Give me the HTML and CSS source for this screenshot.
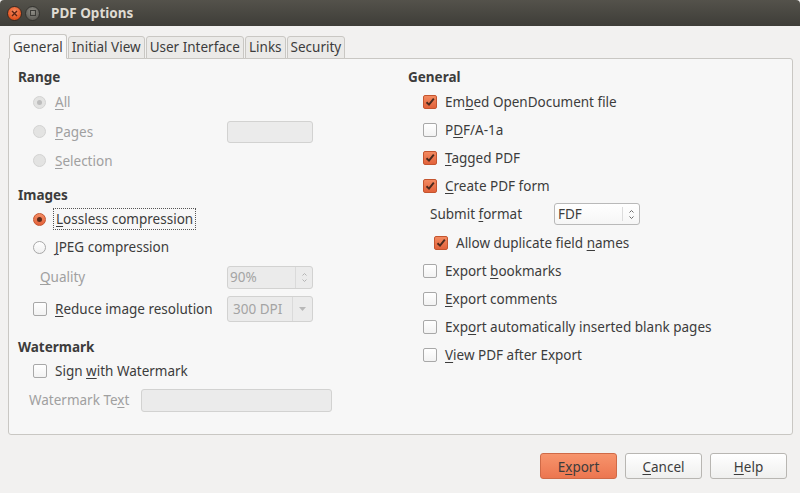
FILE: index.html
```html
<!DOCTYPE html>
<html>
<head>
<meta charset="utf-8">
<link rel="stylesheet" href="styles.css">
</head>
<body>
<div class="titlebar">
  <span class="wbtn close"><svg width="7" height="7" viewBox="0 0 7 7"><path d="M1 1L6 6M6 1L1 6" stroke="#5a2414" stroke-width="1.4"/></svg></span>
  <span class="wbtn grey"><span class="sq"></span></span>
  <span class="title">PDF Options</span>
</div>
<div class="tabs">
  <div class="tab active">General</div>
  <div class="tab">Initial View</div>
  <div class="tab">User Interface</div>
  <div class="tab">Links</div>
  <div class="tab">Security</div>
</div>
<div class="panel">
  <div class="col left">
    <div class="heading">Range</div>
    <div class="row r30">
      <div class="lbl"><span class="radio dis on"></span><span class="txt dim"><u>A</u>ll</span></div>
    </div>
    <div class="row r29">
      <div class="lbl"><span class="radio dis"></span><span class="txt dim"><u>P</u>ages</span></div>
      <div class="field dis w86"></div>
    </div>
    <div class="row r29">
      <div class="lbl"><span class="radio dis"></span><span class="txt dim"><u>S</u>election</span></div>
    </div>
    <div class="heading mt10">Images</div>
    <div class="row r28">
      <div class="lbl"><span class="radio on"></span><span class="txt focus"><u>L</u>ossless compression</span></div>
    </div>
    <div class="row r28">
      <div class="lbl"><span class="radio"></span><span class="txt"><u>J</u>PEG compression</span></div>
    </div>
    <div class="row r32">
      <div class="lbl"><span class="txt dim ind22"><u>Q</u>uality</span></div>
      <div class="field dis w86 spin"><span class="val">90%</span><span class="spinbox"><svg width="5" height="11" viewBox="0 0 5 11"><path d="M0.5 3.5L2.5 1.5L4.5 3.5" fill="none" stroke="#b4b4b4"/><path d="M0.5 7.5L2.5 9.5L4.5 7.5" fill="none" stroke="#b4b4b4"/></svg></span></div>
    </div>
    <div class="row r32">
      <div class="lbl"><span class="check"></span><span class="txt"><u>R</u>educe image resolution</span></div>
      <div class="field dis w86 combo"><span class="val">300 DPI</span><span class="drop"><svg width="7" height="4" viewBox="0 0 7 4"><path d="M0 0H7L3.5 4Z" fill="#b8b8b8"/></svg></span></div>
    </div>
    <div class="heading mt12">Watermark</div>
    <div class="row r28">
      <div class="lbl"><span class="check"></span><span class="txt">Sign <u>w</u>ith Watermark</span></div>
    </div>
    <div class="row r30">
      <span class="txt dim wmlbl">Watermark Te<u>x</u>t</span>
      <div class="field dis wm"></div>
    </div>
  </div>
  <div class="col right">
    <div class="heading">General</div>
    <div class="row r28 mt1"><span class="check on"></span><span class="txt">Em<u>b</u>ed OpenDocument file</span></div>
    <div class="row r28"><span class="check"></span><span class="txt">P<u>D</u>F/A-1a</span></div>
    <div class="row r28"><span class="check on"></span><span class="txt"><u>T</u>agged PDF</span></div>
    <div class="row r28"><span class="check on"></span><span class="txt"><u>C</u>reate PDF form</span></div>
    <div class="row r28">
      <span class="txt sublbl">Submit <u>f</u>ormat</span>
      <div class="field sel"><span class="val">FDF</span><span class="spinbox sep"><svg width="5" height="11" viewBox="0 0 5 11"><path d="M0.5 3.5L2.5 1.5L4.5 3.5" fill="none" stroke="#6a6a6a"/><path d="M0.5 7.5L2.5 9.5L4.5 7.5" fill="none" stroke="#6a6a6a"/></svg></span></div>
    </div>
    <div class="row r29 sub"><span class="check on"></span><span class="txt">Allow duplicate field <u>n</u>ames</span></div>
    <div class="row r28"><span class="check"></span><span class="txt">Export <u>b</u>ookmarks</span></div>
    <div class="row r28"><span class="check"></span><span class="txt"><u>E</u>xport comments</span></div>
    <div class="row r28"><span class="check"></span><span class="txt">Exp<u>o</u>rt automatically inserted blank pages</span></div>
    <div class="row r28"><span class="check"></span><span class="txt"><u>V</u>iew PDF after Export</span></div>
  </div>
</div>
<div class="buttons">
  <button class="btn primary">E<u>x</u>port</button>
  <button class="btn"><u>C</u>ancel</button>
  <button class="btn"><u>H</u>elp</button>
</div>
</body>
</html>
```
FILE: styles.css
```css
* { box-sizing: border-box; }
html, body { margin: 0; padding: 0; }
body {
  width: 800px;
  height: 493px;
  overflow: hidden;
  background: #f2f1f0;
  font-family: "Noto Sans", "Open Sans", sans-serif;
  font-size: 13.5px;
  color: #3c3c3c;
}
u { text-decoration: underline; text-underline-offset: 2px; text-decoration-thickness: 1px; }

.titlebar {
  height: 26px;
  background: linear-gradient(#54524b, #3e3d38);
  display: flex;
  align-items: center;
  padding-left: 7px;
  border-radius: 4px 4px 0 0;
}
.wbtn {
  width: 15px; height: 15px; border-radius: 50%;
  display: flex; align-items: center; justify-content: center;
  margin-right: 3px;
}
.wbtn.close {
  background: radial-gradient(circle at 50% 35%, #f78c62, #e2531f 70%);
  border: 1px solid #3a2a22;
}
.wbtn.grey {
  background: radial-gradient(circle at 50% 35%, #8f8d86, #63615b 70%);
  border: 1px solid #34332f;
}
.wbtn .sq { width: 6px; height: 6px; border: 1px solid #3c3b37; }
.title {
  margin-left: 8px;
  color: #dfdbd2;
  font-weight: bold;
  font-size: 13.5px;
}

.tabs {
  display: flex;
  align-items: flex-end;
  height: 25px;
  margin-top: 8px;
  padding-left: 9px;
  gap: 1px;
  margin-bottom: -1px;
}
.tab {
  position: relative;
  height: 23px;
  padding: 0 3px;
  line-height: 21px;
  font-size: 13.5px;
  background: #ebeae8;
  border: 1px solid #c9c7c3;
  border-radius: 3px 3px 0 0;
  color: #3c3c3c;
}
.tab.active {
  height: 25px;
  line-height: 24px;
  padding: 0 3px;
  background: #f7f7f7;
  border-bottom-color: #f7f7f7;
  z-index: 1;
}

.panel {
  margin: 0 7px 0 8px;
  height: 377px;
  background: #f7f7f7;
  border: 1px solid #c9c7c3;
  border-radius: 0 3px 3px 3px;
  display: grid;
  grid-template-columns: 390px 1fr;
  padding: 8px 0 0 9px;
}

.col { display: flex; flex-direction: column; }
.heading { height: 20px; line-height: 20px; font-weight: bold; font-size: 13.5px; }
.mt10 { margin-top: 10px; }
.mt12 { margin-top: 12px; }
.mt1 { margin-top: 1px; }
.row { display: flex; align-items: center; }
.r28 { height: 28px; }
.r29 { height: 29px; }
.r30 { height: 30px; }
.r32 { height: 32px; }
.lbl { display: flex; align-items: center; width: 209px; flex-shrink: 0; }
.txt { font-size: 13.5px; white-space: nowrap; }
.dim { color: #a0a0a0; }
.ind22 { margin-left: 22px; }
.focus { outline: 1px dotted #555; outline-offset: 1px; padding: 0 1px; }

.radio {
  width: 13px; height: 13px; border-radius: 50%;
  margin-left: 15px; margin-right: 9px;
  background: linear-gradient(#ffffff, #f0f0f0);
  border: 1px solid #a8a8a8;
  display: flex; align-items: center; justify-content: center;
  flex-shrink: 0;
}
.radio.on {
  background: linear-gradient(#f48d64, #e4623a);
  border-color: #c4552f;
}
.radio.on::after {
  content: ""; width: 5px; height: 5px; border-radius: 50%; background: #5a2c1c;
}
.radio.dis { background: #e3e3e2; border-color: #d3d3d2; }
.radio.dis.on::after { background: #bdbdbd; }

.check {
  width: 14px; height: 14px; border-radius: 2px;
  margin-left: 15px; margin-right: 8px;
  background: linear-gradient(#ffffff, #f2f2f2);
  border: 1px solid #a8a8a8;
  flex-shrink: 0;
  display: flex; align-items: center; justify-content: center;
}
.check.on {
  background: linear-gradient(#f38a60, #e2623b);
  border-color: #c4552f;
}
.check.on::after {
  content: "";
  width: 10px; height: 10px;
  background: url("data:image/svg+xml;utf8,<svg xmlns='http://www.w3.org/2000/svg' width='10' height='10' viewBox='0 0 10 10'><path d='M1.5 5.2L4 7.6L8.8 1.6' fill='none' stroke='%234a2a1e' stroke-width='1.9'/></svg>") no-repeat center;
}

.field {
  height: 22px;
  border: 1px solid #d2d2d1;
  border-radius: 3px;
  background: #ebebeb;
  display: flex; align-items: center;
}
.w86 { width: 86px; }
.spin { height: 23px; }
.combo { height: 26px; }
.val { flex: 1; padding-left: 2px; font-size: 13.5px; color: #a4a4a4; }
.spinbox {
  width: 17px; height: 100%;
  border-left: 1px solid #dadada;
  display: flex; align-items: center; justify-content: center;
}
.drop {
  width: 20px; height: 100%;
  border-left: 1px solid #dadada;
  display: flex; align-items: center; justify-content: center;
}
.combo .val { padding-left: 5px; }
.wmlbl { margin-left: 11px; width: 112px; }
.wm { width: 191px; height: 23px; }

.sublbl { margin-left: 22px; width: 124px; }
.sel {
  width: 86px; height: 22px;
  background: linear-gradient(#ffffff, #f6f6f6);
  border-color: #b9b9b9;
}
.sel .val { color: #3c3c3c; padding-left: 3px; }
.sep { border-left: 1px solid #dcdcdc; height: 14px; }
.sub .check { margin-left: 26px; }

.buttons {
  display: flex;
  justify-content: flex-end;
  gap: 8px;
  margin-top: 18px;
  padding-right: 13px;
}
.btn {
  width: 77px; height: 26px;
  font-family: inherit;
  font-size: 13.5px;
  color: #3c3c3c;
  border: 1px solid #b8b6b2;
  border-radius: 3px;
  background: linear-gradient(#ffffff, #efefee);
  padding: 1px 0 0;
}
.btn.primary {
  background: linear-gradient(#f7946c, #ec7650);
  border-color: #cf6a47;
}
```
